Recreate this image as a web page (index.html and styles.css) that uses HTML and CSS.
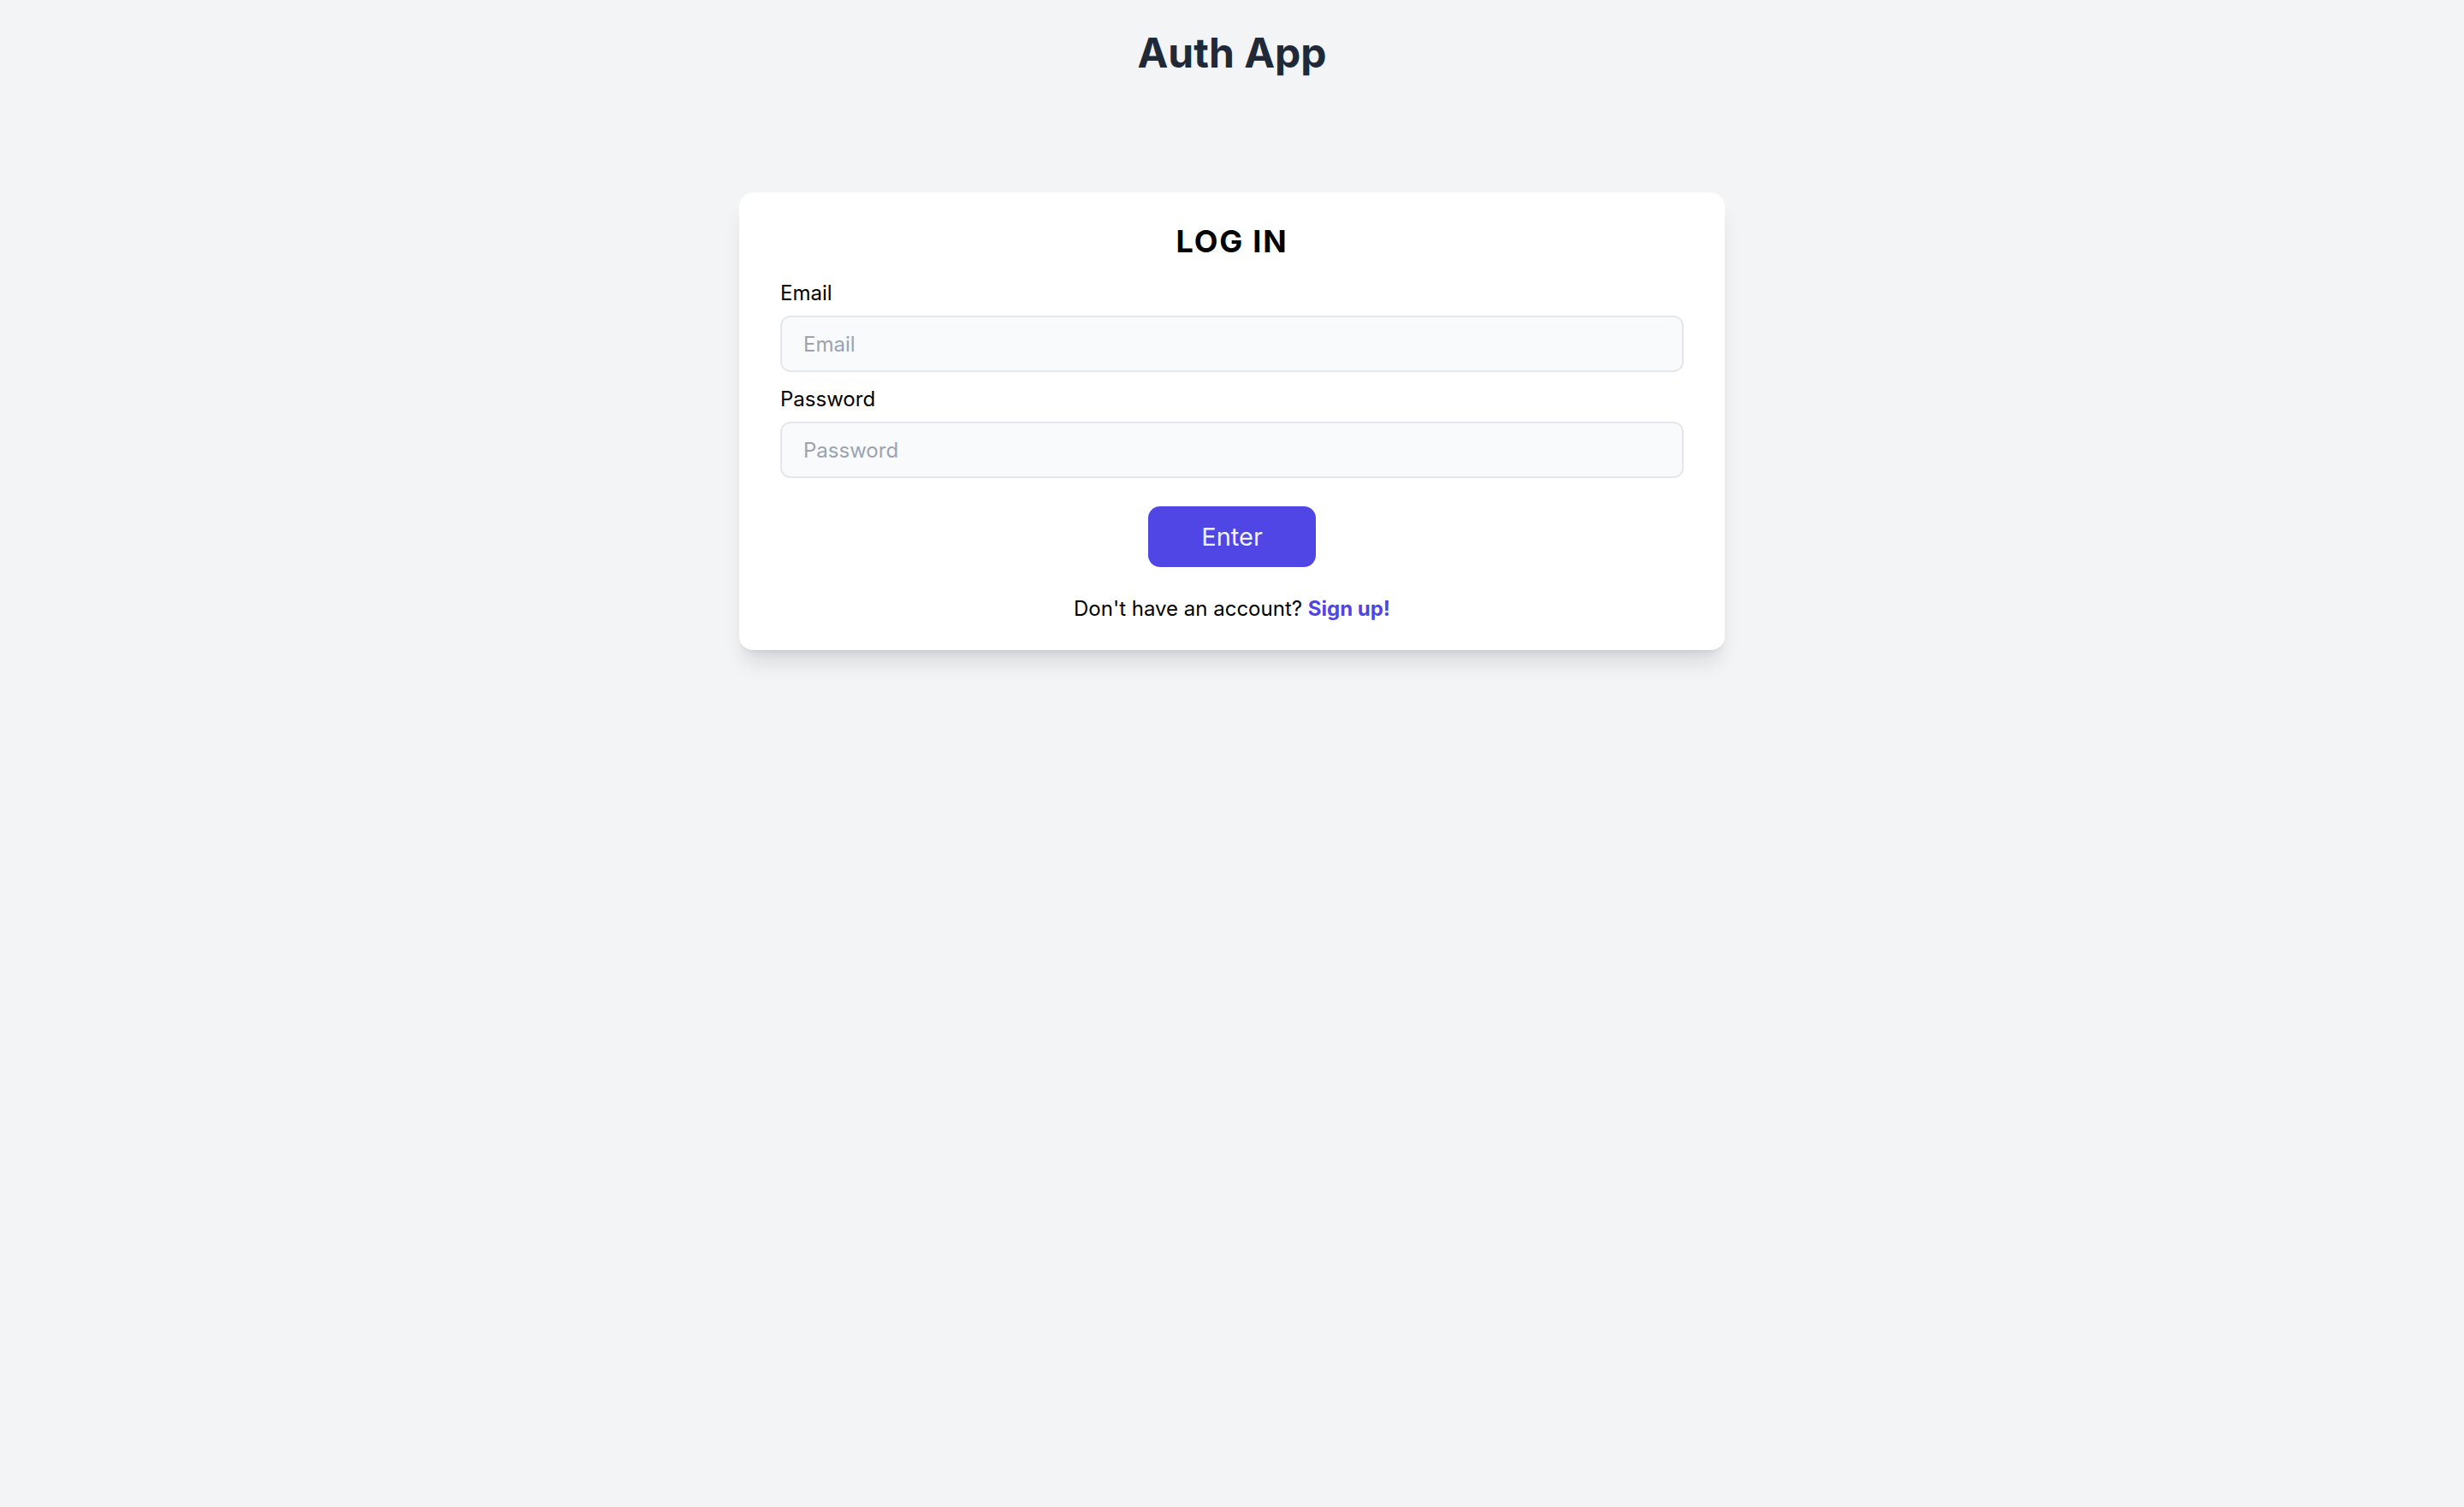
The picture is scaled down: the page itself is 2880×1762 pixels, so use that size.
FILE: index.html
```html
<!DOCTYPE html>
<html lang="en">
<head>
<meta charset="utf-8">
<title>Auth App</title>
<link rel="stylesheet" href="styles.css">
</head>
<body>
<header class="app-header">
  <h1 class="app-title">Auth App</h1>
</header>
<main class="main">
  <form class="card">
    <h2 class="card-title">LOG IN</h2>
    <div class="field">
      <label class="field-label" for="email">Email</label>
      <input class="field-input" id="email" type="email" placeholder="Email">
    </div>
    <div class="field">
      <label class="field-label" for="password">Password</label>
      <input class="field-input" id="password" type="password" placeholder="Password">
    </div>
    <div class="actions">
      <button class="btn-primary" type="button">Enter</button>
    </div>
    <p class="footer-text">Don't have an account? <a class="link" href="#">Sign up!</a></p>
  </form>
</main>
</body>
</html>
```

FILE: styles.css
```css
* { box-sizing: border-box; }

html, body {
  margin: 0;
  padding: 0;
}

body {
  background: #f3f4f6;
  font-family: Inter, "Noto Sans", sans-serif;
  color: #000;
  min-height: 100vh;
}

.app-header {
  padding-top: 30px;
  text-align: center;
}

.app-title {
  margin: 0;
  font-size: 48px;
  line-height: 64px;
  font-weight: 700;
  color: #1f2937;
}

.main {
  display: flex;
  justify-content: center;
  padding-top: 131px;
}

.card {
  width: 1152px;
  background: #ffffff;
  border-radius: 16px;
  box-shadow: 0 20px 25px -5px rgba(0, 0, 0, 0.1), 0 8px 10px -6px rgba(0, 0, 0, 0.1);
  padding: 33px 48px 32px;
  display: flex;
  flex-direction: column;
}

.card-title {
  margin: 0 0 21px 0;
  text-align: center;
  font-size: 36px;
  line-height: 48px;
  font-weight: 700;
  letter-spacing: 0.05em;
  color: #000;
}

.field {
  display: flex;
  flex-direction: column;
  margin-bottom: 16px;
}

.field-label {
  font-size: 24px;
  line-height: 32px;
  margin-bottom: 10px;
  color: #000;
}

.field-input {
  height: 66px;
  width: 100%;
  border: 2px solid #e5e7eb;
  border-radius: 12px;
  background: #f9fafb;
  padding: 0 25px;
  font-family: Inter, "Noto Sans", sans-serif;
  font-size: 24px;
  color: #111827;
  outline: none;
}

.field-input::placeholder {
  color: #9ca3af;
}

.actions {
  display: flex;
  justify-content: center;
  margin-top: 17px;
}

.btn-primary {
  width: 196px;
  height: 71px;
  border: none;
  border-radius: 14px;
  background: #4f46e5;
  color: #eef2ff;
  font-family: Inter, "Noto Sans", sans-serif;
  font-size: 29px;
  font-weight: 400;
  cursor: pointer;
}

.footer-text {
  margin: 33px 0 0 0;
  text-align: center;
  font-size: 24px;
  line-height: 32px;
}

.link {
  color: #4f46e5;
  font-weight: 700;
  text-decoration: none;
}
```
